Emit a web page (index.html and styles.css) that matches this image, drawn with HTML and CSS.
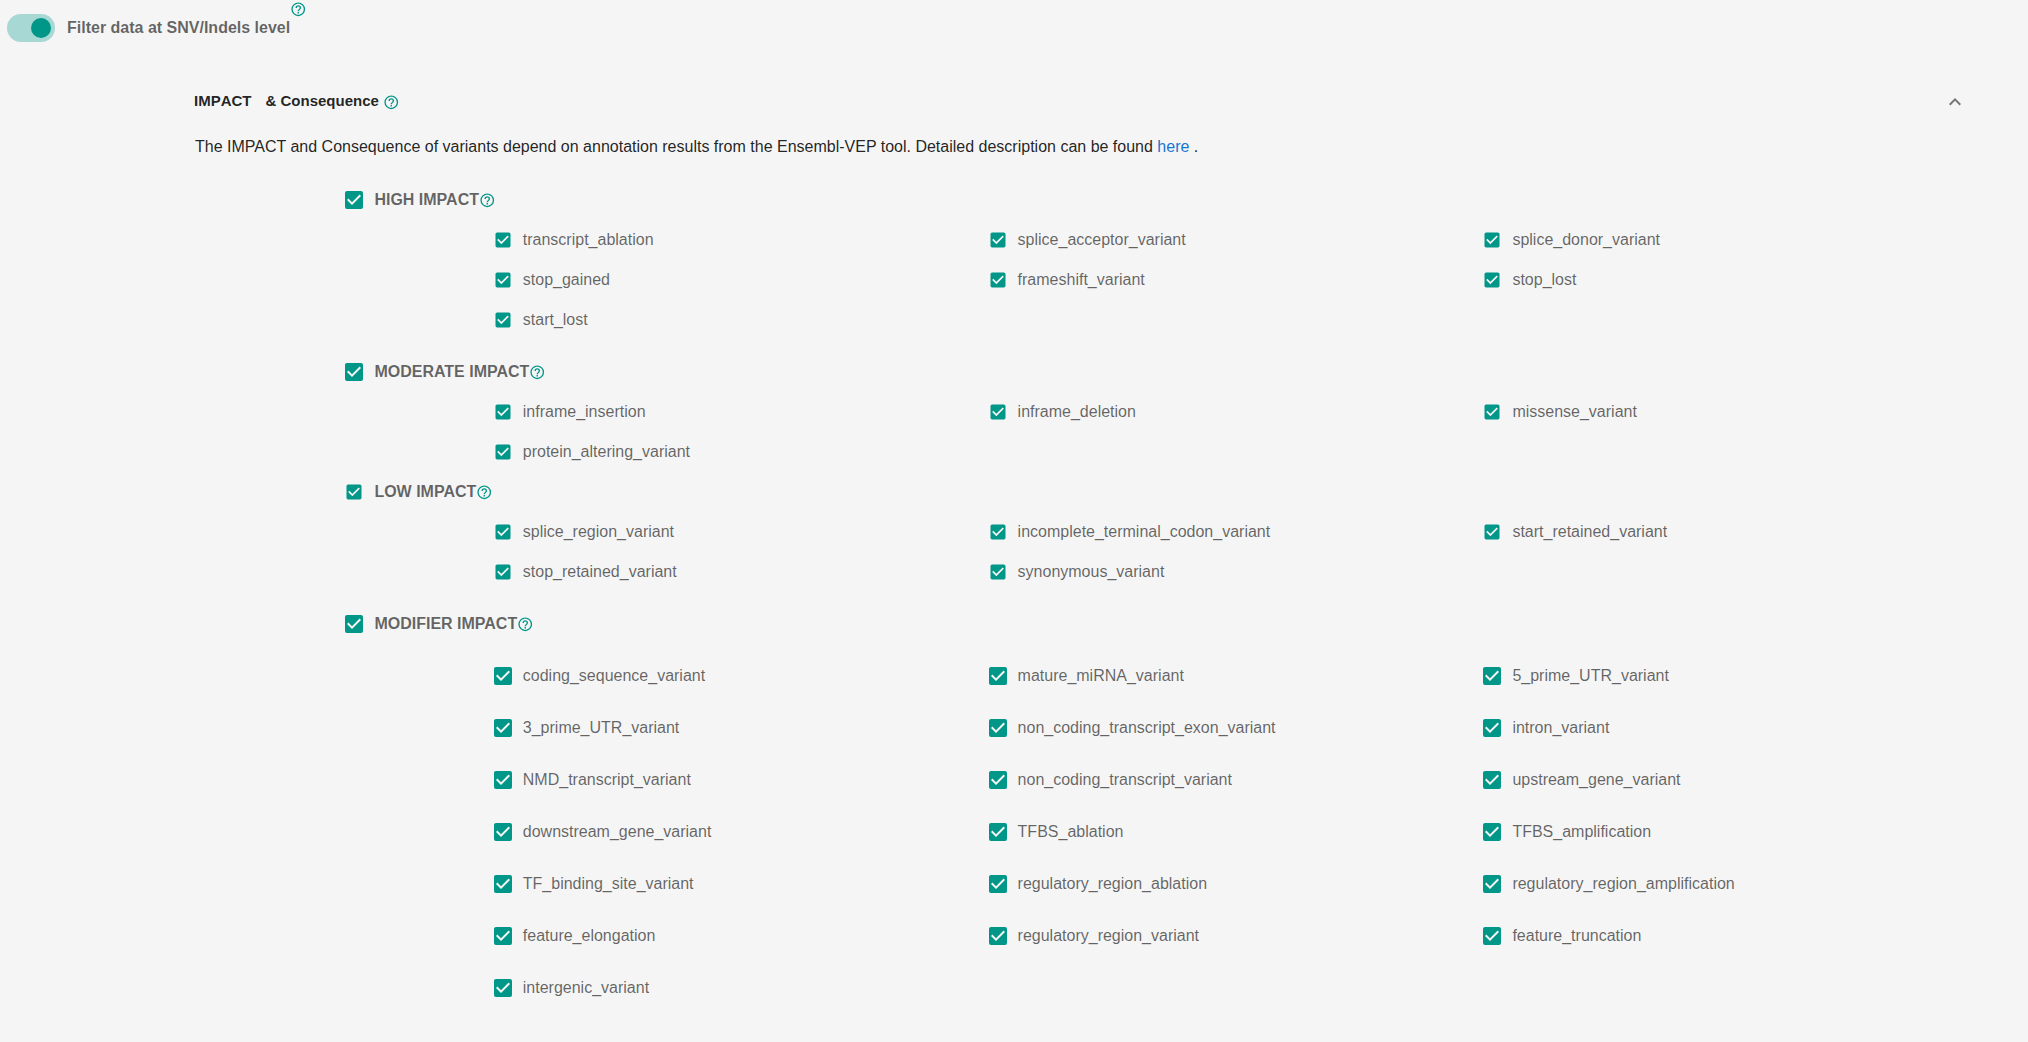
FILE: index.html
```html
<!DOCTYPE html>
<html lang="en">
<head>
<meta charset="utf-8">
<title>Variant filter</title>
<link rel="stylesheet" href="styles.css">
</head>
<body>
<svg class="defs" aria-hidden="true">
  <symbol id="check" viewBox="0 0 24 24"><path d="M10,17L5,12L6.41,10.58L10,14.17L17.59,6.58L19,8M19,3H5C3.89,3 3,3.89 3,5V19A2,2 0 0,0 5,21H19A2,2 0 0,0 21,19V5C21,3.89 20.1,3 19,3Z"/></symbol>
  <symbol id="help" viewBox="0 0 24 24"><path d="M11,18H13V16H11V18M12,2A10,10 0 0,0 2,12A10,10 0 0,0 12,22A10,10 0 0,0 22,12A10,10 0 0,0 12,2M12,20C7.59,20 4,16.41 4,12C4,7.59 7.59,4 12,4C16.41,4 20,7.59 20,12C20,16.41 16.41,20 12,20M12,6A4,4 0 0,0 8,10H10A2,2 0 0,1 12,8A2,2 0 0,1 14,10C14,12 11,11.75 11,15H13C13,12.75 16,12.5 16,10A4,4 0 0,0 12,6Z"/></symbol>
  <symbol id="chevron-up" viewBox="0 0 24 24"><path d="M7.41,15.41L12,10.83L16.59,15.41L18,14L12,8L6,14L7.41,15.41Z"/></symbol>
</svg>

<header class="filter-bar">
  <span class="switch"><span class="knob"></span></span>
  <span class="filter-label">Filter data at SNV/Indels level</span>
  <svg class="help"><use href="#help"/></svg>
</header>

<main class="panel">
  <div class="panel-head">
    <span class="title">IMPACT</span>
    <span class="title title-rest">&amp; Consequence</span>
    <svg class="help"><use href="#help"/></svg>
    <svg class="chevron"><use href="#chevron-up"/></svg>
  </div>
  <p class="intro">The IMPACT and Consequence of variants depend on annotation results from the Ensembl-VEP tool. Detailed description can be found <a class="link" href="#">here</a> .</p>

  <section class="group">
    <div class="group-head"><svg class="check"><use href="#check"/></svg><span>HIGH IMPACT</span><svg class="help"><use href="#help"/></svg></div>
    <div class="options dense">
      <label class="option"><svg class="check"><use href="#check"/></svg><span>transcript_ablation</span></label>
      <label class="option"><svg class="check"><use href="#check"/></svg><span>splice_acceptor_variant</span></label>
      <label class="option"><svg class="check"><use href="#check"/></svg><span>splice_donor_variant</span></label>
      <label class="option"><svg class="check"><use href="#check"/></svg><span>stop_gained</span></label>
      <label class="option"><svg class="check"><use href="#check"/></svg><span>frameshift_variant</span></label>
      <label class="option"><svg class="check"><use href="#check"/></svg><span>stop_lost</span></label>
      <label class="option"><svg class="check"><use href="#check"/></svg><span>start_lost</span></label>
    </div>
  </section>

  <section class="group">
    <div class="group-head"><svg class="check"><use href="#check"/></svg><span>MODERATE IMPACT</span><svg class="help"><use href="#help"/></svg></div>
    <div class="options dense">
      <label class="option"><svg class="check"><use href="#check"/></svg><span>inframe_insertion</span></label>
      <label class="option"><svg class="check"><use href="#check"/></svg><span>inframe_deletion</span></label>
      <label class="option"><svg class="check"><use href="#check"/></svg><span>missense_variant</span></label>
      <label class="option"><svg class="check"><use href="#check"/></svg><span>protein_altering_variant</span></label>
    </div>
  </section>

  <section class="group">
    <div class="group-head dense"><svg class="check"><use href="#check"/></svg><span>LOW IMPACT</span><svg class="help"><use href="#help"/></svg></div>
    <div class="options dense">
      <label class="option"><svg class="check"><use href="#check"/></svg><span>splice_region_variant</span></label>
      <label class="option"><svg class="check"><use href="#check"/></svg><span>incomplete_terminal_codon_variant</span></label>
      <label class="option"><svg class="check"><use href="#check"/></svg><span>start_retained_variant</span></label>
      <label class="option"><svg class="check"><use href="#check"/></svg><span>stop_retained_variant</span></label>
      <label class="option"><svg class="check"><use href="#check"/></svg><span>synonymous_variant</span></label>
    </div>
  </section>

  <section class="group">
    <div class="group-head"><svg class="check"><use href="#check"/></svg><span>MODIFIER IMPACT</span><svg class="help"><use href="#help"/></svg></div>
    <div class="options">
      <label class="option"><svg class="check"><use href="#check"/></svg><span>coding_sequence_variant</span></label>
      <label class="option"><svg class="check"><use href="#check"/></svg><span>mature_miRNA_variant</span></label>
      <label class="option"><svg class="check"><use href="#check"/></svg><span>5_prime_UTR_variant</span></label>
      <label class="option"><svg class="check"><use href="#check"/></svg><span>3_prime_UTR_variant</span></label>
      <label class="option"><svg class="check"><use href="#check"/></svg><span>non_coding_transcript_exon_variant</span></label>
      <label class="option"><svg class="check"><use href="#check"/></svg><span>intron_variant</span></label>
      <label class="option"><svg class="check"><use href="#check"/></svg><span>NMD_transcript_variant</span></label>
      <label class="option"><svg class="check"><use href="#check"/></svg><span>non_coding_transcript_variant</span></label>
      <label class="option"><svg class="check"><use href="#check"/></svg><span>upstream_gene_variant</span></label>
      <label class="option"><svg class="check"><use href="#check"/></svg><span>downstream_gene_variant</span></label>
      <label class="option"><svg class="check"><use href="#check"/></svg><span>TFBS_ablation</span></label>
      <label class="option"><svg class="check"><use href="#check"/></svg><span>TFBS_amplification</span></label>
      <label class="option"><svg class="check"><use href="#check"/></svg><span>TF_binding_site_variant</span></label>
      <label class="option"><svg class="check"><use href="#check"/></svg><span>regulatory_region_ablation</span></label>
      <label class="option"><svg class="check"><use href="#check"/></svg><span>regulatory_region_amplification</span></label>
      <label class="option"><svg class="check"><use href="#check"/></svg><span>feature_elongation</span></label>
      <label class="option"><svg class="check"><use href="#check"/></svg><span>regulatory_region_variant</span></label>
      <label class="option"><svg class="check"><use href="#check"/></svg><span>feature_truncation</span></label>
      <label class="option"><svg class="check"><use href="#check"/></svg><span>intergenic_variant</span></label>
    </div>
  </section>
</main>
</body>
</html>
```
FILE: styles.css
```css
* { box-sizing: border-box; }

body {
  margin: 0;
  height: 1042px;
  overflow: hidden;
  background: #f5f5f5;
  color: rgba(0, 0, 0, 0.87);
  font: 16px/20px "Liberation Sans", Arial, sans-serif;
}

.defs { display: none; }

.check, .help, .chevron { flex: none; fill: #009688; }
.check { width: 24px; height: 24px; margin-right: 8px; }
.dense .check { width: 20px; height: 20px; margin: 0 10px 0 2px; }
.help { width: 16.5px; height: 16.5px; }

.filter-bar {
  display: flex;
  align-items: center;
  height: 56px;
  padding-left: 7px;
}
.switch {
  display: flex;
  justify-content: flex-end;
  align-items: center;
  width: 48px;
  height: 28px;
  padding-right: 4px;
  border-radius: 14px;
  background: #a7d8d3;
}
.knob { width: 20px; height: 20px; border-radius: 50%; background: #009688; }
.filter-label {
  margin-left: 12px;
  font-weight: bold;
  color: rgba(0, 0, 0, 0.6);
}
.filter-bar .help { align-self: flex-start; margin-top: 1px; }

.panel { padding-left: 194px; }
.panel-head {
  display: flex;
  align-items: center;
  height: 50px;
  margin-top: 20px;
  padding: 2px 61px 0 0;
}
.title {
  margin-top: -2px;
  font-size: 15px;
  font-weight: bold;
  font-kerning: none;
}
.title-rest { margin: -2px 4.5px 0 14px; }
.chevron { width: 24px; height: 24px; margin-left: auto; fill: #757575; }
.intro { margin: 11px 0 11px 1px; }
.link { color: #1976d2; text-decoration: none; }

.group-head {
  display: flex;
  align-items: center;
  height: 52px;
  padding: 12px 0 0 148.4px;
  font-weight: bold;
  color: rgba(0, 0, 0, 0.6);
}
.group-head.dense { height: 40px; padding-top: 0; }
.group-head span, .option span { margin-top: -1px; }

.options {
  display: grid;
  grid-template-columns: repeat(3, 494.8px);
  grid-auto-rows: 52px;
  padding-left: 296.8px;
  color: rgba(0, 0, 0, 0.6);
}
.options.dense { grid-auto-rows: 40px; }
.option { display: flex; align-items: center; padding-top: 12px; }
.dense .option { padding-top: 0; }
```
